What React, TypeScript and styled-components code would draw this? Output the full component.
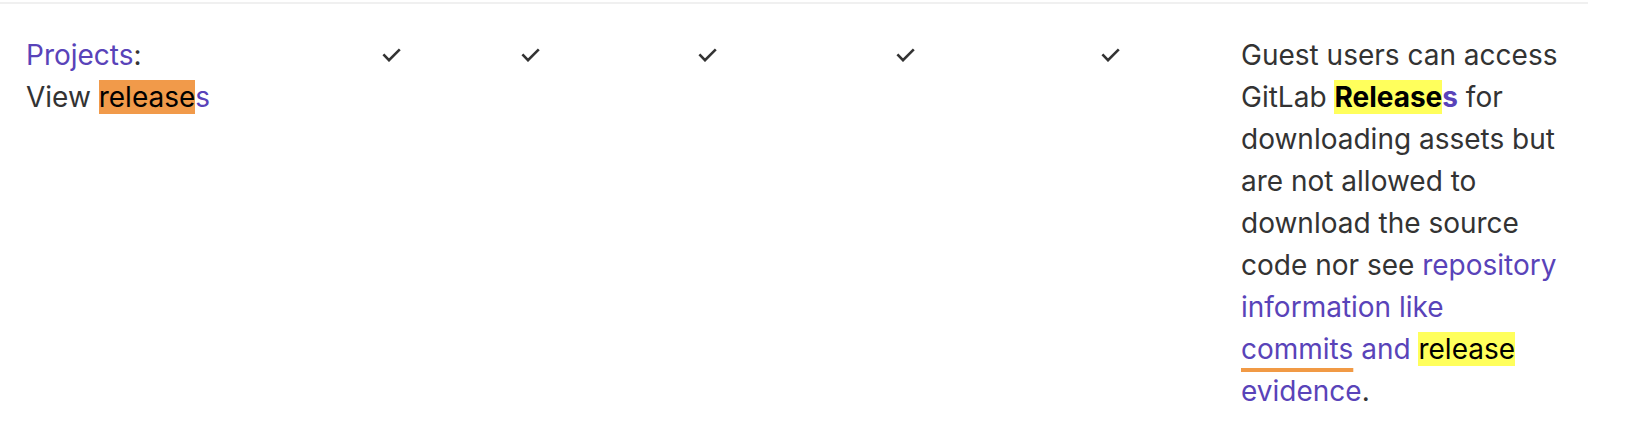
import { FC, ReactNode } from "react";
import styled, { createGlobalStyle } from "styled-components";

const GlobalStyle = createGlobalStyle`
  html, body {
    margin: 0;
    padding: 0;
    background: #ffffff;
  }
  body {
    font-family: Inter, "Noto Sans", "Liberation Sans", sans-serif;
    color: #333333;
  }
`;

const Table = styled.div`
  width: 1588px;
  padding-top: 2px;
`;

const Row = styled.div`
  display: grid;
  grid-template-columns: 356px 139px 177px 198px 205px 140px 373px;
  border-top: 2px solid #f0f0f0;
`;

const Cell = styled.div`
  padding: 30px 26px 24px;
  font-size: 28px;
  line-height: 42px;
  color: #333333;
`;

const CheckCell = styled(Cell)`
  display: flex;
  align-items: flex-start;
`;

const CheckBox = styled.span`
  display: flex;
  align-items: center;
  height: 42px;
`;

const Link = styled.a<{ $bold?: boolean; $underline?: boolean }>`
  color: #5943b9;
  text-decoration: none;
  font-weight: ${(p) => (p.$bold ? 700 : 400)};
  ${(p) =>
    p.$underline &&
    `
    text-decoration: underline;
    text-decoration-color: #f19a45;
    text-decoration-thickness: 4px;
    text-underline-offset: 9px;
  `}
`;

const Mark = styled.mark<{ $current?: boolean }>`
  background: ${(p) => (p.$current ? "#f19a4a" : "#ffff5c")};
  color: #000000;
`;

const Check: FC = () => (
  <CheckBox>
    <svg width="19" height="14" viewBox="0 0 19 14" fill="none">
      <polyline
        points="1.4,6.4 7,12.2 17.8,1.4"
        stroke="#333333"
        strokeWidth="2.6"
        strokeLinecap="butt"
        strokeLinejoin="miter"
      />
    </svg>
  </CheckBox>
);

const Checks: FC<{ count: number }> = ({ count }) => (
  <>
    {Array.from({ length: count }).map((_, i) => (
      <CheckCell key={i}>
        <Check />
      </CheckCell>
    ))}
  </>
);

const Description: FC<{ children?: ReactNode }> = ({ children }) => (
  <Cell>{children}</Cell>
);

export default function App() {
  return (
    <>
      <GlobalStyle />
      <Table>
        <Row>
          <Cell>
            <Link href="#">Projects</Link>:
            <br />
            View{" "}
            <Link href="#">
              <Mark $current>release</Mark>s
            </Link>
          </Cell>
          <Checks count={5} />
          <Description>
            Guest users can access GitLab{" "}
            <Link href="#" $bold>
              <Mark>Release</Mark>s
            </Link>{" "}
            for downloading assets but are not allowed to download the source
            code nor see{" "}
            <Link href="#">
              repository information like{" "}
              <Link as="span" $underline>
                commits
              </Link>{" "}
              and <Mark>release</Mark> evidence
            </Link>
            .
          </Description>
        </Row>
      </Table>
    </>
  );
}
